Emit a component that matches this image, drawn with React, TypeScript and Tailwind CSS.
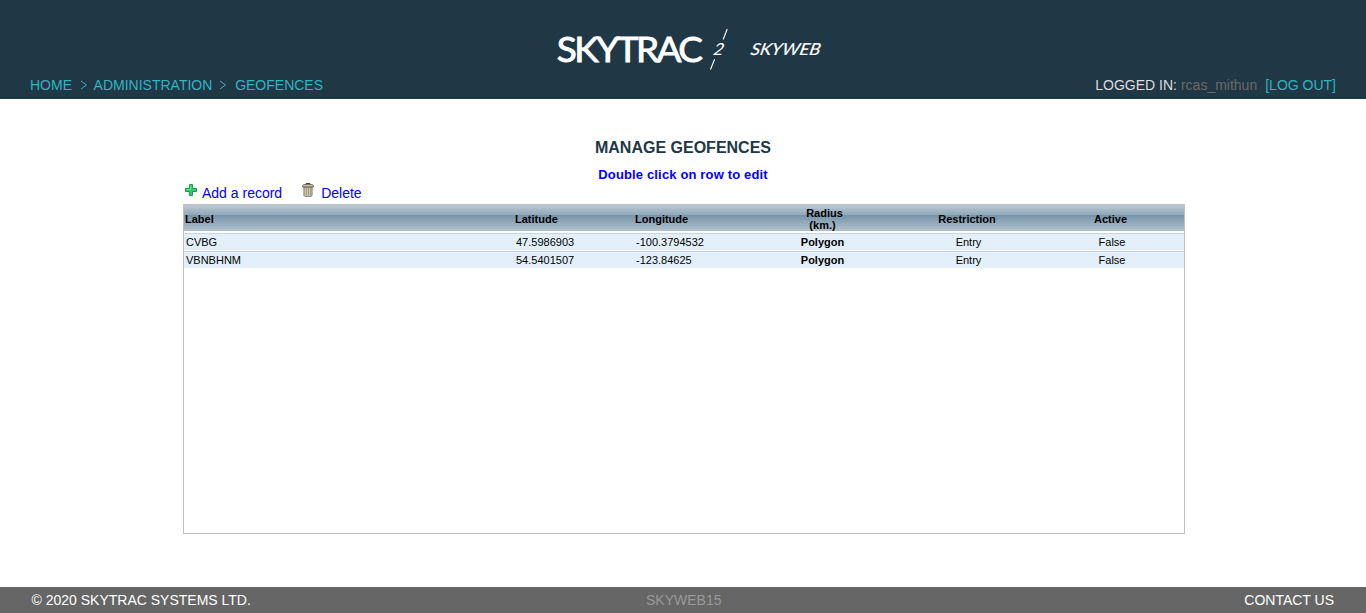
const columns = 'grid grid-cols-[330px_120px_120px_144px_144px_142px]';

const records = [
  { label: 'CVBG', lat: '47.5986903', lng: '-100.3794532' },
  { label: 'VBNBHNM', lat: '54.5401507', lng: '-123.84625' },
];

function Logo() {
  return (
    <svg width="270" height="46" viewBox="0 0 270 46" fill="#fff" className="block" role="img" aria-label="SKYTRAC SKYWEB">
      <g fontFamily="Lato, sans-serif">
        <text transform="translate(0.8 36.9) scale(1.04 1)" fontSize="35.5" fontWeight="400" stroke="#fff" strokeWidth="0.9" textLength="140.5" lengthAdjust="spacing">SKYTRAC</text>
        <text transform="translate(156.5 30) skewX(-12)" fontSize="16.5" fontStyle="italic" textLength="10.5" lengthAdjust="spacingAndGlyphs">2</text>
        <text transform="translate(194 30) skewX(-12)" fontSize="16.5" fontStyle="italic" stroke="#fff" strokeWidth="0.15" textLength="69.5" lengthAdjust="spacingAndGlyphs">SKYWEB</text>
      </g>
      <path d="M171.2 4 L167.2 14.5 M158.6 34.3 L154.5 44.5" stroke="#fff" strokeWidth="1.1" fill="none" />
    </svg>
  );
}

function Chevron() {
  return (
    <svg width="8" height="10" viewBox="0 0 8 10" className="mt-[5px] block">
      <path d="M1 1l5.5 4L1 9" fill="none" stroke="#30b4bf" />
    </svg>
  );
}

function PlusIcon() {
  return (
    <svg width="12" height="12" viewBox="0 0 12 12" className="block">
      <path d="M4.5 .5h3v4h4v3h-4v4h-3v-4h-4v-3h4z" fill="#2fcf70" stroke="#12a048" />
      <path d="M5.5 1.5v4h-4" stroke="#6fe39c" fill="none" />
    </svg>
  );
}

function TrashIcon() {
  return (
    <svg width="12" height="14" viewBox="0 0 12 14" className="block">
      <path d="M2 4h8v8.5l-.8 .8H2.8l-.8-.8z" fill="#e6dfc8" stroke="#655a45" strokeWidth=".9" />
      <path d="M4.2 5v7.3M6.2 5v7.3M8.2 5v7.3" stroke="#786c50" strokeWidth=".8" />
      <path d="M4 1.5v-1h4v1" stroke="#554c3e" fill="none" />
      <path d="M.6 3.9v-1.3l1-.9h8.8l1 .9v1.3z" fill="#e0d7ba" stroke="#554c3e" strokeWidth=".9" />
    </svg>
  );
}

export default function App() {
  return (
    <div className="flex h-[613px] w-full flex-col bg-white font-['Liberation_Sans',Arial,sans-serif] text-sm">
      <header className="flex h-[99px] shrink-0 flex-col bg-[#203746] pt-[25px]">
        <div className="pl-[556px]"><Logo /></div>
        <div className="mt-1 flex h-5 items-center justify-between px-[30px] text-[#30b4bf]">
          <nav className="flex">
            <a className="mr-2">HOME</a>
            <Chevron />
            <a className="mr-[7px] ml-[5.6px]">ADMINISTRATION</a>
            <Chevron />
            <a className="ml-[7.8px]">GEOFENCES</a>
          </nav>
          <div className="flex">
            <span className="text-[#dddddd]">LOGGED IN:</span>
            <span className="ml-1 mr-2 text-[#696969]">rcas_mithun</span>
            <a>[LOG OUT]</a>
          </div>
        </div>
      </header>

      <main className="flex flex-1 flex-col pl-[183px]">
        <div className="w-[1000px] text-center">
          <h1 className="mt-[39px] text-base leading-5 font-bold text-[#203746]">MANAGE GEOFENCES</h1>
          <p className="mt-2 text-[13px] leading-[18px] font-bold tracking-[0.15px] text-[#0000ff]">Double click on row to edit</p>
        </div>
        <div className="flex h-5 text-[#0000ff]">
          <div className="ml-[2px]"><PlusIcon /></div>
          <a className="ml-[5px] leading-[18px]">Add a record</a>
          <div className="-mt-[1px] ml-[20px]"><TrashIcon /></div>
          <a className="ml-[7px] leading-[18px]">Delete</a>
        </div>
        <section className="h-[330px] w-[1002px] border border-[#c0c0c0] text-[11px] text-black">
          <div className={`${columns} h-[26px] items-center bg-[linear-gradient(#bbc9d5_0px,#91a8b9_10px,#7593a8_10px,#b3c2cf_26px)] pt-[2px] leading-3 font-bold`}>
            <span className="pl-[1px]">Label</span>
            <span className="pl-[1px]">Latitude</span>
            <span className="pl-[1px]">Longitude</span>
            <span className="pr-[7px] text-center"><span className="ml-[4px]">Radius</span><br />(km.)</span>
            <span className="pr-[6px] text-center">Restriction</span>
            <span className="pr-[5px] text-center">Active</span>
          </div>
          <div className="mt-[2px] flex flex-col gap-[1px]">
            {records.map((r) => (
              <div key={r.label} className={`${columns} h-[17px] items-center border-t border-[#c8d3da] bg-[#e3f0fa] leading-4`}>
                <span className="pl-[2px]">{r.label}</span>
                <span className="pl-[2px]">{r.lat}</span>
                <span className="pl-[2px]">{r.lng}</span>
                <span className="pr-[7px] text-center font-bold">Polygon</span>
                <span className="pr-[3px] text-center">Entry</span>
                <span className="pr-[2px] text-center">False</span>
              </div>
            ))}
          </div>
        </section>
      </main>

      <footer className="flex h-[26px] shrink-0 items-center justify-between bg-[#666666] pr-8 pl-[31.5px] text-white">
        <span className="w-[400px]">© 2020 SKYTRAC SYSTEMS LTD.</span>
        <span className="ml-[2px] text-center text-[#999999]">SKYWEB15</span>
        <a className="w-[400px] text-right">CONTACT US</a>
      </footer>
    </div>
  );
}
